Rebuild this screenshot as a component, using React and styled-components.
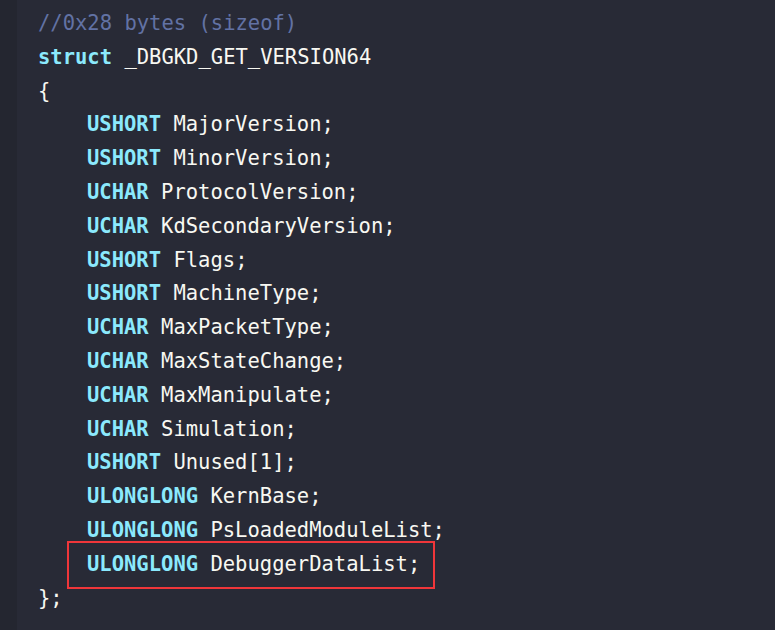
import React from 'react';
import styled, { createGlobalStyle } from "styled-components";

const GlobalStyle = createGlobalStyle`
    html, body {
        margin: 0;
        padding: 0;
        background-color: #282a36;
    }
`;

const Page = styled.div`
    display: flex;
    width: 775px;
    height: 630px;
    overflow: hidden;
    background-color: #282a36;
`;

const Gutter = styled.div`
    width: 17px;
    flex-shrink: 0;
    background-color: #242630;
`;

const Code = styled.pre`
    margin: 0;
    padding: 7px 0 0 21px;
    font-family: "DejaVu Sans Mono", "Liberation Mono", monospace;
    font-size: 20.5px;
    line-height: 33.8px;
    color: #f8f8f2;
`;

const Line = styled.div`
    padding-left: ${props => props.indent ? '49px' : '0'};
    white-space: pre;
`;

const Comment = styled.span`
    color: #6272a4;
`;

const Keyword = styled.span`
    color: #8be9fd;
    font-weight: bold;
`;

const Highlight = styled.span`
    padding: 9px 13px 11px 18px;
    margin-left: -20px;
    border: 2px solid #f0363a;
`;

const fields = [
    ['USHORT', 'MajorVersion'],
    ['USHORT', 'MinorVersion'],
    ['UCHAR', 'ProtocolVersion'],
    ['UCHAR', 'KdSecondaryVersion'],
    ['USHORT', 'Flags'],
    ['USHORT', 'MachineType'],
    ['UCHAR', 'MaxPacketType'],
    ['UCHAR', 'MaxStateChange'],
    ['UCHAR', 'MaxManipulate'],
    ['UCHAR', 'Simulation'],
    ['USHORT', 'Unused[1]'],
    ['ULONGLONG', 'KernBase'],
    ['ULONGLONG', 'PsLoadedModuleList'],
];

function App() {
    return (
        <Page>
            <GlobalStyle />
            <Gutter />
            <Code>
                <Line><Comment>//0x28 bytes (sizeof)</Comment></Line>
                <Line><Keyword>struct</Keyword> _DBGKD_GET_VERSION64</Line>
                <Line>{'{'}</Line>
                {fields.map(([type, name]) =>
                    <Line indent key={name}>
                        <Keyword>{type}</Keyword> {name};
                    </Line>
                )}
                <Line indent>
                    <Highlight><Keyword>ULONGLONG</Keyword> DebuggerDataList;</Highlight>
                </Line>
                <Line>{'};'}</Line>
            </Code>
        </Page>
    );
}

export default App;
